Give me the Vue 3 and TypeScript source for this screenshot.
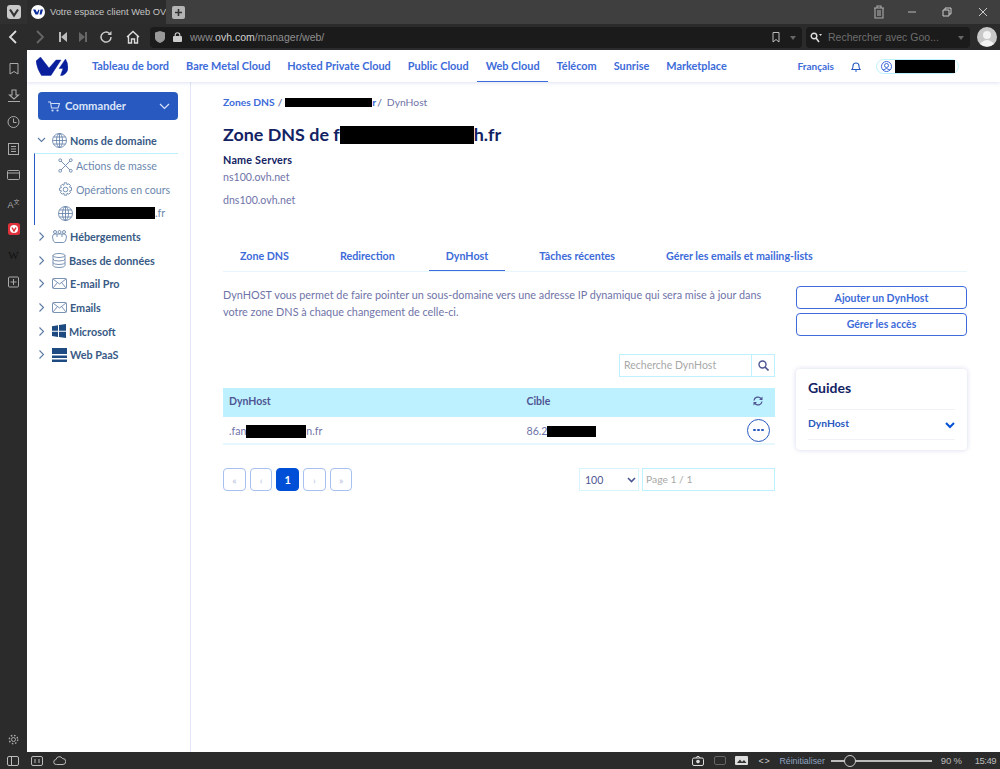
<script setup lang="ts">
const topNav = ['Tableau de bord', 'Bare Metal Cloud', 'Hosted Private Cloud', 'Public Cloud', 'Web Cloud', 'Télécom', 'Sunrise', 'Marketplace']
const tabs = ['Zone DNS', 'Redirection', 'DynHost', 'Tâches récentes', 'Gérer les emails et mailing-lists']
const navItems = [
  { label: 'Hébergements', icon: 'hosting' },
  { label: 'Bases de données', icon: 'db' },
  { label: 'E-mail Pro', icon: 'mail' },
  { label: 'Emails', icon: 'mail' },
  { label: 'Microsoft', icon: 'ms' },
  { label: 'Web PaaS', icon: 'paas' },
]
const pages = ['«', '‹', '1', '›', '»']
</script>

<template>
  <div class="app">
    <div class="titlebar">
      <div class="v-btn"><svg width="14" height="14" viewBox="0 0 14 14"><rect width="14" height="14" rx="3" fill="#c9c9c9"/><path d="M3 4.5 7 10.5 11 4.5" fill="none" stroke="#333" stroke-width="2.2"/></svg></div>
      <div class="tab-active">
        <svg class="favicon" width="14" height="14" viewBox="0 0 14 14"><circle cx="7" cy="7" r="7" fill="#fff"/><path d="M2 4.5h2.500l1.500 3 1.500-3 1 .5L7 9.500H4.500zM9.500 4.500H12l-1.500 5H8.500z" fill="#0b2c9c"/></svg>
        <span class="tab-title">Votre espace client Web OV</span>
      </div>
      <div class="new-tab"><svg width="13" height="13" viewBox="0 0 13 13"><rect width="13" height="13" rx="2" fill="#b5b5b5"/><path d="M6.500 3v7M3 6.500h7" stroke="#333" stroke-width="1.600"/></svg></div>
      <div class="spacer"></div>
      <div class="win-controls">
        <svg width="12" height="14" viewBox="0 0 12 14"><path d="M1 3h10M4 3V1h4v2M2 3v10h8V3M5 5v6M7 5v6" fill="none" stroke="#aaa" stroke-width="1.100"/></svg>
        <svg class="w-min" width="10" height="10" viewBox="0 0 10 10"><path d="M1 5h8" stroke="#bbb" stroke-width="1"/></svg>
        <svg class="w-res" width="10" height="10" viewBox="0 0 10 10"><path d="M1 3h6v6H1zM3 3V1h6v6H7" fill="none" stroke="#ccc"/></svg>
        <svg class="w-close" width="10" height="10" viewBox="0 0 10 10"><path d="M1 1l8 8M9 1l-8 8" stroke="#ccc"/></svg>
      </div>
    </div>

    <div class="toolbar">
      <div class="nav-btns">
        <svg width="12" height="14" viewBox="0 0 12 14"><path d="M9 1 3 7l6 6" fill="none" stroke="#ddd" stroke-width="1.800"/></svg>
        <svg class="fwd" width="12" height="14" viewBox="0 0 12 14"><path d="M3 1l6 6-6 6" fill="none" stroke="#666" stroke-width="1.800"/></svg>
        <svg class="rew" width="8" height="10" viewBox="0 0 8 10"><path d="M0 0h2v10H0zM8 0v10L2 5z" fill="#bbb"/></svg>
        <svg class="ffw" width="8" height="10" viewBox="0 0 8 10"><path d="M8 0H6v10h2zM0 0v10l6-5z" fill="#666"/></svg>
        <svg class="rel" width="14" height="14" viewBox="0 0 14 14"><path d="M12 7a5 5 0 1 1-1.500-3.500" fill="none" stroke="#ccc" stroke-width="1.500"/><path d="M12.500 1v4h-4z" fill="#ccc"/></svg>
        <svg class="hom" width="14" height="14" viewBox="0 0 14 14"><path d="M1 7 7 1.500 13 7M2.500 6v7h3V9h3v4h3V6" fill="none" stroke="#ddd" stroke-width="1.400"/></svg>
      </div>
      <div class="addr">
        <svg width="10" height="12" viewBox="0 0 10 12"><path d="M0 1.500 5 0l5 1.500V7q0 3-5 5-5-2-5-5z" fill="#999"/></svg>
        <svg class="lock" width="9" height="10" viewBox="0 0 9 10"><rect y="4" width="9" height="6" rx="1" fill="#ccc"/><path d="M2.200 4.500V3a2.300 2.300 0 0 1 4.600 0v1.500" fill="none" stroke="#ccc" stroke-width="1.100"/></svg>
        <span class="url">www.<b>ovh.com</b>/manager/web/</span>
        <span class="spacer"></span>
        <svg width="8" height="11" viewBox="0 0 8 11"><path d="M1 .500h6v9.500L4 7.500 1 10z" fill="none" stroke="#bbb"/></svg>
        <span class="caret"></span>
      </div>
      <div class="search">
        <svg width="12" height="11" viewBox="0 0 12 11"><circle cx="4" cy="4" r="2.800" fill="none" stroke="#ddd" stroke-width="1.400"/><path d="m6 6 3 4" stroke="#ddd" stroke-width="1.600"/><path d="M9 2h3l-1.500 2z" fill="#ddd"/></svg>
        <span class="search-text">Rechercher avec Goo...</span>
        <span class="spacer"></span>
        <span class="caret"></span>
      </div>
      <svg class="avatar" width="20" height="20" viewBox="0 0 20 20"><circle cx="10" cy="10" r="10" fill="#c8c8c8"/><circle cx="10" cy="8" r="4" fill="#f2f2f2"/><path d="M3 17q7-8 14 0-7 5-14 0" fill="#f2f2f2"/></svg>
    </div>

    <div class="body">
      <aside class="panel">
        <div class="panel-icons">
          <svg width="10" height="12" viewBox="0 0 10 12"><path d="M1 .500h8V11L5 8.500 1 11z" fill="none" stroke="#aaa"/></svg>
          <svg width="14" height="14" viewBox="0 0 14 14"><path d="M5 1h4v5h2.500L7 10 2.500 6H5zM1 12.500h12" fill="none" stroke="#aaa" stroke-width="1.100"/></svg>
          <svg width="13" height="13" viewBox="0 0 13 13"><circle cx="6.500" cy="6.500" r="5.500" fill="none" stroke="#aaa"/><path d="M6.500 3v4h3" fill="none" stroke="#aaa"/></svg>
          <svg width="11" height="12" viewBox="0 0 11 12"><rect x=".5" y=".5" width="10" height="11" fill="none" stroke="#aaa"/><path d="M3 3.500h5M3 6h5M3 8.500h5" stroke="#aaa"/></svg>
          <svg width="13" height="10" viewBox="0 0 13 10"><rect x=".5" y=".5" width="12" height="9" rx="1" fill="none" stroke="#aaa"/><path d="M1 3h11" stroke="#aaa"/></svg>
          <span class="trans">A<sup>文</sup></span>
          <svg width="12" height="12" viewBox="0 0 12 12"><rect width="12" height="12" rx="2.500" fill="#e0323b"/><circle cx="6" cy="6" r="4" fill="#fff"/><path d="M4 4.500 6 8l2-3.500" fill="none" stroke="#e0323b" stroke-width="1.500"/></svg>
          <span class="wiki">W</span>
          <svg width="11" height="11" viewBox="0 0 11 11"><rect x=".5" y=".5" width="10" height="10" rx="1" fill="none" stroke="#aaa"/><path d="M5.500 2.500v6M2.500 5.500h6" stroke="#aaa"/></svg>
        </div>
        <svg class="gear" width="11" height="11" viewBox="0 0 11 11"><circle cx="5.500" cy="5.500" r="2" fill="none" stroke="#aaa"/><circle cx="5.500" cy="5.500" r="4.200" fill="none" stroke="#aaa" stroke-width="1.400" stroke-dasharray="1.600 1.700"/></svg>
      </aside>

      <div class="page">
        <header class="head">
          <svg class="logo" width="32" height="19" viewBox="0 0 32 19"><path d="M0 4 4.500 0 13 11 20 3H25L15 18.500H5.500Q1 12 0 4zM24.500 18.500 27 11.500H23L29.500 2Q32 6 32 10.500 32 16 26.500 18.500z" fill="#0a1f9c" stroke="#0a1f9c" stroke-width=".4"/></svg>
          <nav class="top-nav">
            <a v-for="n in topNav" :key="n" :class="{ on: n === 'Web Cloud' }">{{ n }}</a>
          </nav>
          <div class="spacer"></div>
          <a class="lang">Français</a>
          <svg class="bell" width="10" height="11" viewBox="0 0 10 11"><path d="M1 8.500q1-1 1-3.500a3 3 0 0 1 6 0q0 2.500 1 3.500zM4 10h2" fill="none" stroke="#2859c0" stroke-width="1.100"/></svg>
          <div class="user">
            <svg width="11" height="11" viewBox="0 0 11 11"><circle cx="5.500" cy="5.500" r="5" fill="none" stroke="#3d6bd9"/><circle cx="5.500" cy="4.500" r="2" fill="none" stroke="#3d6bd9"/><path d="M2 9q3.500-3 7 0" fill="none" stroke="#3d6bd9"/></svg>
            <span class="mask user-mask"></span>
          </div>
        </header>

        <div class="content">
          <nav class="side">
            <button class="order">
              <svg width="12" height="11" viewBox="0 0 12 11"><path d="M0 1h2.500l1 6h6.500l1.500-4.500H3" fill="none" stroke="#cfdcf5" stroke-width="1.100"/><circle cx="4.500" cy="9.500" r="1.100" fill="#cfdcf5"/><circle cx="9.500" cy="9.500" r="1.100" fill="#cfdcf5"/></svg>
              <span class="order-label">Commander</span>
              <span class="spacer"></span>
              <svg width="11" height="7" viewBox="0 0 11 7"><path d="m1 1 4.500 4.500L10 1" fill="none" stroke="#dbe5f8" stroke-width="1.200"/></svg>
            </button>
            <div class="group-head">
              <svg class="chev" width="9" height="6" viewBox="0 0 9 6"><path d="m1 1 3.500 3.500L8 1" fill="none" stroke="#5b7aa5" stroke-width="1.100"/></svg>
              <svg class="ni" width="15" height="15" viewBox="0 0 15 15"><g fill="none" stroke="#5b7aa5" stroke-width=".8"><circle cx="7.500" cy="7.500" r="7"/><ellipse cx="7.500" cy="7.500" rx="3" ry="7"/><path d="M7.500 .5v14M1.500 4h12M.5 7.500h14M1.500 11h12"/></g></svg>
              <b>Noms de domaine</b>
            </div>
            <div class="sub">
              <div class="sub-item">
                <svg width="15" height="15" viewBox="0 0 15 15"><g fill="none" stroke="#6b87ad" stroke-width=".9"><path d="M3 3l9 9M12 3l-9 9"/><circle cx="2.200" cy="2.200" r="1.400"/><circle cx="12.800" cy="2.200" r="1.400"/><circle cx="2.200" cy="12.800" r="1.400"/><circle cx="12.800" cy="12.800" r="1.400"/></g></svg>
                Actions de masse
              </div>
              <div class="sub-item">
                <svg width="15" height="15" viewBox="0 0 15 15"><g fill="none" stroke="#6b87ad" stroke-width=".9"><circle cx="7.500" cy="7.500" r="2.300"/><path d="M6.300 .8h2.400l.4 2 1.700-1 1.700 1.700-1 1.700 2 .4v2.800l-2 .4 1 1.700-1.700 1.700-1.700-1-.4 2H6.300l-.4-2-1.700 1-1.700-1.700 1-1.700-2-.4V6.100l2-.4-1-1.700 1.700-1.700 1.700 1z"/></g></svg>
                Opérations en cours
              </div>
              <div class="sub-item">
                <svg width="15" height="15" viewBox="0 0 15 15"><g fill="none" stroke="#5b7aa5" stroke-width=".8"><circle cx="7.500" cy="7.500" r="7"/><ellipse cx="7.500" cy="7.500" rx="3" ry="7"/><path d="M7.500 .5v14M1.500 4h12M.5 7.500h14M1.500 11h12"/></g></svg>
                <span class="mask sub-mask"></span><span class="tld">.fr</span>
              </div>
            </div>
            <div v-for="it in navItems" :key="it.label" class="group-head item">
              <svg class="chev" width="6" height="9" viewBox="0 0 6 9"><path d="m1 .5 4 4-4 4" fill="none" stroke="#5b7aa5" stroke-width="1.100"/></svg>
              <svg v-if="it.icon === 'hosting'" class="ni" width="15" height="13" viewBox="0 0 15 13"><g fill="none" stroke="#6b87ad" stroke-width=".9"><circle cx="3" cy="2" r="1.500"/><circle cx="7.500" cy="2" r="1.500"/><circle cx="12" cy="2" r="1.500"/><path d="M.5 7q0-3 2.500-3h9q2.500 0 2.500 3-.5 5.500-3 5.500H3Q1 12.500.5 7zM5 4v3M10 4v3"/></g></svg>
              <svg v-else-if="it.icon === 'db'" class="ni" width="14" height="15" viewBox="0 0 14 15"><g fill="none" stroke="#6b87ad" stroke-width=".9"><ellipse cx="7" cy="2.500" rx="6" ry="2"/><path d="M1 2.500v10q0 2 6 2t6-2v-10M1 6q0 2 6 2t6-2M1 9.500q0 2 6 2t6-2"/></g></svg>
              <svg v-else-if="it.icon === 'mail'" class="ni" width="15" height="11" viewBox="0 0 15 11"><g fill="none" stroke="#6b87ad" stroke-width=".9"><rect x=".5" y=".5" width="14" height="10" rx="1"/><path d="m1 1 6.500 5L14 1M1 10l4.500-5.500M14 10 9.500 4.500"/></g></svg>
              <svg v-else-if="it.icon === 'ms'" class="ni" width="14" height="14" viewBox="0 0 14 14"><path d="M0 2.200 6 1.300v5.400H0zM7 1.100 14 0v6.700H7zM0 7.700h6v5.200l-6-.9zM7 7.700h7V14l-7-1z" fill="#1d4a80"/></svg>
              <svg v-else class="ni" width="15" height="14" viewBox="0 0 15 14"><path d="M0 0h15v6H0zM0 7.500h15v2.500H0zM0 11.500h15V14H0z" fill="#1d4a80"/></svg>
              <b>{{ it.label }}</b>
            </div>
          </nav>

          <main class="main">
            <div class="crumbs">
              <a>Zones DNS</a><span class="sep">/</span><span class="mask crumb-mask"></span><a>r</a><span class="sep sep-end">/</span><span class="crumb-last">DynHost</span>
            </div>
            <h1>Zone DNS de f<span class="mask h1-mask"></span>h.fr</h1>
            <h2>Name Servers</h2>
            <p class="ns first">ns100.ovh.net</p>
            <p class="ns">dns100.ovh.net</p>

            <div class="tabs">
              <a v-for="t in tabs" :key="t" :class="{ on: t === 'DynHost' }">{{ t }}</a>
            </div>

            <div class="columns">
              <section class="left">
                <p class="desc">DynHOST vous permet de faire pointer un sous-domaine vers une adresse IP dynamique qui sera mise à jour dans votre zone DNS à chaque changement de celle-ci.</p>
                <div class="search-row">
                  <div class="table-search">
                    <span class="ph">Recherche DynHost</span>
                    <span class="s-btn"><svg width="11" height="11" viewBox="0 0 11 11"><circle cx="4.500" cy="4.500" r="3.500" fill="none" stroke="#4d5693" stroke-width="1.400"/><path d="m7 7 3.500 3.500" stroke="#4d5693" stroke-width="1.600"/></svg></span>
                  </div>
                </div>
                <div class="thead">
                  <span class="c1">DynHost</span>
                  <span class="c2">Cible</span>
                  <svg width="10" height="10" viewBox="0 0 10 10"><path d="M1 4.500A4 4 0 0 1 8 2.500M9 5.500A4 4 0 0 1 2 7.500" fill="none" stroke="#4d5693" stroke-width="1.300"/><path d="M9.500 .5v3.500H6zM.5 9.500V6H4z" fill="#4d5693"/></svg>
                </div>
                <div class="trow">
                  <span class="c1">.fan<span class="mask row-mask1"></span>n.fr</span>
                  <span class="c2">86.2<span class="mask row-mask2"></span></span>
                  <span class="more"><i></i><i></i><i></i></span>
                </div>
                <div class="pager">
                  <span v-for="p in pages" :key="p" class="pg" :class="{ on: p === '1' }">{{ p }}</span>
                  <span class="spacer"></span>
                  <span class="size">100<svg width="9" height="6" viewBox="0 0 9 6"><path d="m1 1 3.500 3.500L8 1" fill="none" stroke="#4d5693" stroke-width="1.600"/></svg></span>
                  <span class="page-input">Page 1 / 1</span>
                </div>
              </section>
              <aside class="right">
                <button class="outline">Ajouter un DynHost</button>
                <button class="outline">Gérer les accès</button>
                <div class="card">
                  <h3>Guides</h3>
                  <div class="guide">
                    <a class="guide-link">DynHost</a>
                    <svg class="guide-chev" width="10" height="7" viewBox="0 0 10 7"><path d="m1 1 4 4 4-4" fill="none" stroke="#0050d7" stroke-width="2"/></svg>
                  </div>
                </div>
              </aside>
            </div>
          </main>
        </div>
      </div>
    </div>

    <footer class="status">
      <svg width="12" height="10" viewBox="0 0 12 10"><rect x=".5" y=".5" width="11" height="9" rx="1.500" fill="none" stroke="#bbb"/><path d="M4.500 1v8" stroke="#bbb"/></svg>
      <svg class="st2" width="12" height="10" viewBox="0 0 12 10"><rect x=".5" y=".5" width="11" height="9" rx="1.500" fill="none" stroke="#bbb"/><path d="M4 3v4M8 3v4" stroke="#bbb"/></svg>
      <svg class="st3" width="13" height="9" viewBox="0 0 13 9"><path d="M3.500 8.500a2.500 2.500 0 0 1-.5-5 3.500 3.500 0 0 1 6.500-1 3 3 0 0 1 .5 6z" fill="none" stroke="#bbb"/></svg>
      <span class="spacer"></span>
      <svg width="12" height="10" viewBox="0 0 12 10"><rect x=".5" y="2" width="11" height="7.500" rx="1.500" fill="none" stroke="#ddd"/><path d="M4 2l1-1.500h2L8 2" fill="none" stroke="#ddd"/><circle cx="6" cy="5.500" r="1.800" fill="#ddd"/></svg>
      <svg class="st5" width="12" height="9" viewBox="0 0 12 9"><rect x=".5" y=".5" width="11" height="8" rx="1.500" fill="none" stroke="#666"/></svg>
      <svg class="st6" width="13" height="9" viewBox="0 0 13 9"><rect width="13" height="9" rx="1" fill="#ddd"/><path d="m2 7 3-3.500L7 6l2-2 2.500 3z" fill="#333"/></svg>
      <span class="code">&lt;&#8202;&gt;</span>
      <span class="reset">Réinitialiser</span>
      <span class="slider"><i></i></span>
      <span class="pct">90 %</span>
      <span class="clock">15:49</span>
    </footer>
  </div>
</template>

<style>
html, body { margin: 0; padding: 0; background: #fff; }
</style>

<style scoped>
.app { width: 1000px; height: 769px; display: flex; flex-direction: column; overflow: hidden; font-family: "Lato", "Noto Sans", sans-serif; font-size: 11px; color: #4d5693; }
.spacer { flex: 1; }
.mask { display: inline-block; background: #000; vertical-align: middle; }

.titlebar { height: 24px; background: #3f3f3f; display: flex; align-items: stretch; flex: none; }
.v-btn { width: 27px; display: flex; align-items: center; justify-content: center; background: #303030; }
.tab-active { width: 139px; box-sizing: border-box; background: #2c2c2c; display: flex; align-items: center; padding-left: 4px; gap: 5px; overflow: hidden; }
.favicon { flex: none; }
.tab-title { color: #c4c4c4; font-size: 9.300px; white-space: nowrap; font-family: "Liberation Sans", sans-serif; }
.new-tab { width: 24px; display: flex; align-items: center; justify-content: center; }
.win-controls { display: flex; align-items: center; padding-right: 12px; }
.w-min { margin-left: 22px; }
.w-res { margin-left: 25px; }
.w-close { margin-left: 26px; }

.toolbar { height: 26px; background: #2b2b2b; display: flex; align-items: center; flex: none; }
.nav-btns { width: 150px; display: flex; align-items: center; padding-left: 7px; box-sizing: border-box; }
.fwd { margin-left: 15px; }
.rew { margin-left: 13px; }
.ffw { margin-left: 12px; }
.rel { margin-left: 12px; }
.hom { margin-left: 13px; }
.addr { width: 652px; height: 21px; background: #1b1b1b; border-radius: 4px; display: flex; align-items: center; padding: 0 6px 0 5px; box-sizing: border-box; margin-right: 4px; }
.lock { margin-left: 8px; }
.url { margin-left: 8px; color: #8f8f8f; font-size: 10.500px; font-family: "Liberation Sans", sans-serif; }
.url b { color: #d0d0d0; font-weight: 400; }
.caret { width: 0; height: 0; border: 3.500px solid transparent; border-top: 4px solid #666; margin: 4px 0 0 10px; }
.search { width: 164px; height: 21px; background: #1b1b1b; border-radius: 4px; display: flex; align-items: center; padding: 0 6px 0 4px; box-sizing: border-box; }
.search-text { margin-left: 6px; color: #6e6e6e; font-size: 10.500px; font-family: "Liberation Sans", sans-serif; white-space: nowrap; }
.avatar { margin-left: 7px; }

.body { flex: 1; display: flex; min-height: 0; }
.panel { width: 27px; background: #2b2b2b; flex: none; display: flex; flex-direction: column; align-items: center; justify-content: space-between; padding: 12px 0 7px; box-sizing: border-box; }
.panel-icons { display: flex; flex-direction: column; align-items: center; }
.panel-icons > * { height: 14px; margin-bottom: 12.600px; }
.trans { color: #aaa; font-size: 9px; line-height: 14px; font-family: "Liberation Sans", sans-serif; }
.trans sup { font-size: 6px; font-family: "Noto Sans CJK SC", sans-serif; }
.wiki { color: #111; font-family: "Liberation Serif", serif; font-size: 11px; line-height: 14px; }

.page { flex: 1; display: flex; flex-direction: column; min-width: 0; }
.head { height: 32px; flex: none; display: flex; align-items: center; padding-left: 9px; box-shadow: 0 1px 4px rgba(60, 80, 170, .16); position: relative; box-sizing: border-box; }
.logo { flex: none; }
.top-nav { display: flex; margin-left: 15.500px; height: 32px; }
.top-nav a { color: #3d6bd9; font-weight: 700; font-size: 10.900px; line-height: 32px; padding: 0 8.500px; white-space: nowrap; box-sizing: border-box; }
.top-nav a.on { border-bottom: 1px solid #3d6bd9; }
.lang { color: #3d6bd9; font-weight: 700; font-size: 10px; }
.bell { margin-left: 17px; }
.user { margin: 0 41px 0 15px; height: 15px; width: 83px; border: 1px solid #bef1ff; border-radius: 9px; display: flex; align-items: center; padding-left: 4px; gap: 3px; box-sizing: border-box; }
.user-mask { width: 60px; height: 13px; }

.content { flex: 1; display: flex; min-height: 0; }
.side { width: 164px; flex: none; border-right: 1px solid #e4e7fa; box-sizing: border-box; padding: 10px 12px 0 7px; }
.order { width: 140px; height: 28px; margin-left: 4px; border: 0; border-radius: 4px; background: #2859c0; color: #dbe5f8; font: 700 11.200px "Lato", sans-serif; display: flex; align-items: center; padding: 0 8px 0 10px; gap: 5px; }
.order-label { padding-bottom: 2px; }
.group-head { display: flex; align-items: center; height: 24px; margin-top: 8px; color: #385a85; font-size: 10.800px; padding-left: 3px; white-space: nowrap; }
.group-head b { font-weight: 700; }
.chev { flex: none; width: 9px; }
.ni { margin: 0 3px 0 6px; flex: none; }
.group-head.item { margin-top: 0; height: 23.600px; padding-left: 3px; }
.sub { margin-top: 1px; border-left: 1px solid #2859c0; border-top: 1px solid #bef1ff; padding-left: 23px; height: 72px; box-sizing: border-box; }
.sub-item { height: 23.700px; display: flex; align-items: center; gap: 3px; color: #6b87ad; font-size: 10.600px; white-space: nowrap; }
.sub-mask { width: 79px; height: 12px; }
.tld { margin-left: -3px; }

.main { flex: 1; padding: 13px 33px 0 32px; min-width: 0; box-sizing: border-box; }
.crumbs { height: 14px; line-height: 14px; font-size: 10.300px; display: flex; align-items: center; white-space: nowrap; }
.crumbs a { color: #3d6bd9; font-weight: 700; }
.sep { margin: 0 3px; color: #4d5693; }
.sep-end { margin-left: 1px; }
.crumb-mask { width: 87px; height: 9px; }
.crumb-last { color: #6f74a8; margin-left: 2px; font-size: 10.300px; }
h1 { margin: 13px 0 0; color: #122263; font-size: 17.900px; line-height: 24px; font-weight: 700; white-space: nowrap; }
.h1-mask { width: 134px; height: 18px; margin-top: -2px; }
h2 { margin: 7px 0 0; color: #122263; font-size: 10.800px; line-height: 14px; font-weight: 700; letter-spacing: .2px; }
.ns { margin: 9px 0 0; font-size: 10.600px; line-height: 14px; color: #6f74a8; }
.ns.first { margin-top: 3px; }

.tabs { margin-top: 35px; height: 29px; display: flex; border-bottom: 1px solid #e6f6fd; }
.tabs a { color: #3d6bd9; font-weight: 700; font-size: 10.700px; line-height: 28px; padding: 0 17px; margin-right: 17px; box-sizing: border-box; white-space: nowrap; height: 29px; }
.tabs a:last-child { margin-right: 0; }
.tabs a.on { border-bottom: 1px solid #3d6bd9; }

.columns { display: flex; gap: 21px; margin-top: 14px; }
.left { width: 552px; flex: none; }
.right { width: 171px; flex: none; display: flex; flex-direction: column; }
.desc { margin: 0; font-size: 10.850px; line-height: 17px; color: #6f74a8; }
.search-row { display: flex; justify-content: flex-end; margin-top: 34px; }
.table-search { width: 156px; height: 23px; border: 1px solid #bef1ff; box-sizing: border-box; display: flex; background: #fff; }
.ph { flex: 1; color: #a8a8a8; font-size: 10.500px; line-height: 21px; padding-left: 4px; }
.s-btn { width: 22px; border-left: 1px solid #bef1ff; display: flex; align-items: center; justify-content: center; }
.thead { height: 29px; margin-top: 11px; background: #bef1ff; display: flex; align-items: center; padding: 0 12px 3px 6px; box-sizing: border-box; font-weight: 700; font-size: 10.500px; color: #4d5693; }
.c1 { width: 297.500px; flex: none; display: flex; align-items: center; }
.c2 { flex: 1; display: flex; align-items: center; }
.trow { height: 28px; display: flex; align-items: center; padding: 0 5px 0 6px; border-bottom: 2px solid #e6f8fe; box-sizing: border-box; font-size: 10.600px; color: #6f74a8; }
.trow .c1, .trow .c2 { margin-top: 2px; }
.row-mask1 { width: 60px; height: 13px; }
.row-mask2 { width: 49px; height: 11px; }
.more { width: 23px; height: 23px; border: 1px solid #2859c0; border-radius: 50%; box-sizing: border-box; display: flex; align-items: center; justify-content: center; gap: 1.500px; }
.more i { width: 2.500px; height: 2.500px; border-radius: 50%; background: #2859c0; }
.pager { display: flex; align-items: center; margin-top: 23px; gap: 4px; }
.pg { width: 22.700px; height: 23px; box-sizing: border-box; border: 1px solid #a6c0f0; border-radius: 4px; display: flex; align-items: center; justify-content: center; color: #b4c0dc; font-size: 10px; }
.pg.on { background: #0050d7; border-color: #0050d7; color: #fff; font-weight: 700; font-size: 11px; }
.size { width: 60px; height: 23px; border: 1px solid #d6f6ff; box-sizing: border-box; display: flex; align-items: center; justify-content: space-between; padding: 0 2px 0 5px; font-size: 10.500px; }
.page-input { width: 133px; height: 23px; border: 1px solid #bef1ff; box-sizing: border-box; margin-left: -1px; color: #a8a8a8; font-size: 10.300px; line-height: 21px; padding-left: 3px; }

.outline { height: 23px; box-sizing: border-box; background: #fff; border: 1px solid #3d6bd9; border-radius: 4px; color: #3d6bd9; font: 700 10.500px "Lato", sans-serif; padding: 0; }
.outline + .outline { margin-top: 4px; padding-bottom: 2px; }
.card { margin-top: 33px; height: 81px; box-sizing: border-box; border-radius: 4px; box-shadow: 0 0 5px rgba(60, 80, 170, .22); padding: 10px 12px 0; }
h3 { margin: 0; color: #122263; font-size: 14px; line-height: 18px; font-weight: 700; }
.guide { margin-top: 12px; height: 29px; border-top: 1px solid #f0f2f8; border-bottom: 1px solid #f0f2f8; display: flex; align-items: center; justify-content: space-between; color: #2859c0; font-weight: 700; font-size: 10.300px; }
.guide-link { padding-bottom: 3px; }
.guide-chev { margin-top: 1px; }

.status { height: 17px; flex: none; background: #2b2b2b; display: flex; align-items: center; padding: 0 4px 0 7px; color: #aaa; }
.st2 { margin-left: 12px; }
.st3 { margin-left: 10px; }
.st5 { margin-left: 10px; }
.st6 { margin-left: 9px; }
.code { margin-left: 10px; color: #ccc; font-size: 9px; font-family: "Liberation Sans", sans-serif; width: 12px; }
.reset { margin-left: 9px; color: #8fa3c0; font-size: 8.800px; font-family: "Liberation Sans", sans-serif; }
.slider { margin-left: 6px; width: 101px; height: 2px; background: #bbb; position: relative; }
.slider i { position: absolute; left: 13px; top: -5px; width: 12px; height: 12px; border-radius: 50%; border: 1px solid #ccc; background: #2b2b2b; box-sizing: border-box; }
.pct { margin-left: 9px; font-size: 9.500px; letter-spacing: -.2px; font-family: "Liberation Sans", sans-serif; color: #bbb; }
.clock { margin-left: 13px; font-size: 9.500px; letter-spacing: -.5px; font-family: "Liberation Sans", sans-serif; color: #bbb; }
</style>
